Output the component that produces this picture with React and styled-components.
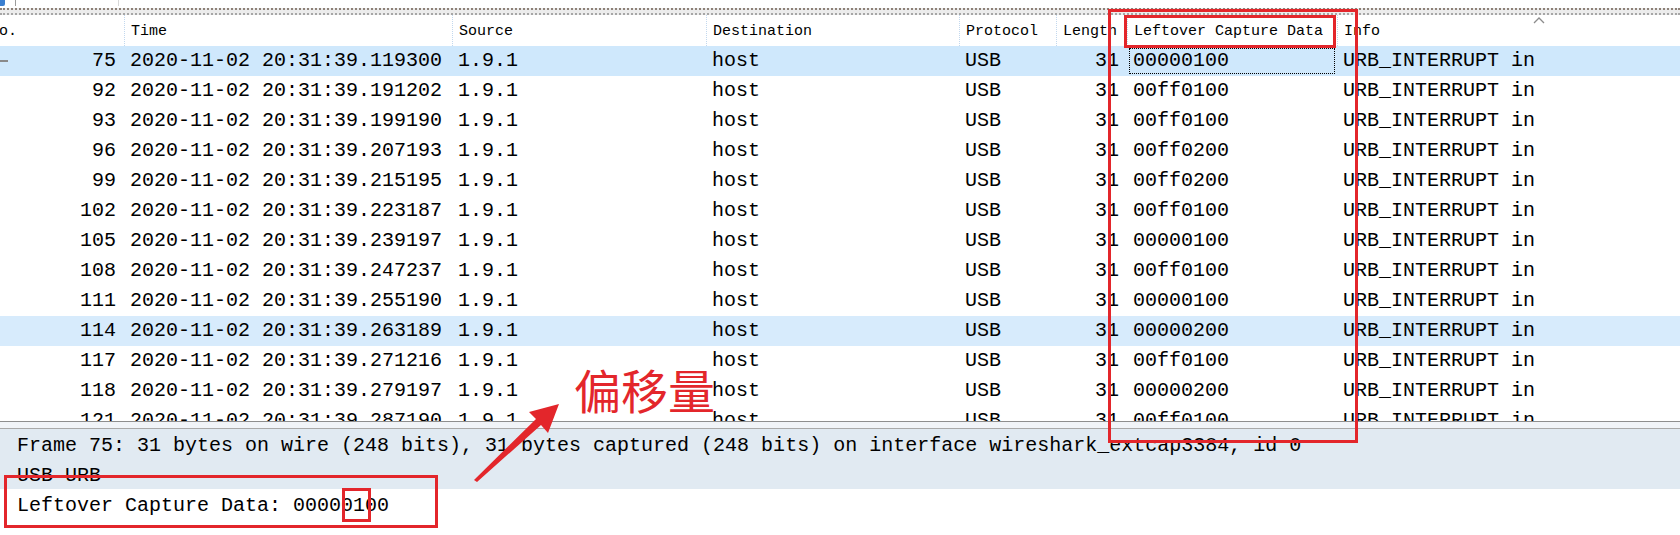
import React from 'react';
import styled, { createGlobalStyle } from 'styled-components';

const RED = '#e3262b';
const MONO = `"Liberation Mono", "DejaVu Sans Mono", monospace`;

const COLUMNS = [
  { key: 'no', title: 'No.', width: 140, align: 'right' },
  { key: 'time', title: 'Time', width: 328 },
  { key: 'src', title: 'Source', width: 254 },
  { key: 'dst', title: 'Destination', width: 253 },
  { key: 'proto', title: 'Protocol', width: 97 },
  { key: 'len', title: 'Length', width: 71, align: 'right' },
  { key: 'data', title: 'Leftover Capture Data', width: 210 },
  { key: 'info', title: 'Info', width: 402 },
];
const GRID = COLUMNS.map((c) => c.width + 'px').join(' ');

// [no, time fraction, leftover data]
const PACKETS = [
  [75, '119300', '00000100'],
  [92, '191202', '00ff0100'],
  [93, '199190', '00ff0100'],
  [96, '207193', '00ff0200'],
  [99, '215195', '00ff0200'],
  [102, '223187', '00ff0100'],
  [105, '239197', '00000100'],
  [108, '247237', '00ff0100'],
  [111, '255190', '00000100'],
  [114, '263189', '00000200'],
  [117, '271216', '00ff0100'],
  [118, '279197', '00000200'],
  [121, '287190', '00ff0100'],
];
const SELECTED = 0;
const HOVER = 9;

const GlobalStyle = createGlobalStyle`
  html, body { margin: 0; padding: 0; background: #fff; }
  body { overflow: hidden; }
`;

const Screen = styled.div`
  position: relative;
  width: 1680px;
  height: 535px;
  overflow: hidden;
  display: flex;
  flex-direction: column;
  background: #fff;
  color: #000;
  font-family: ${MONO};
`;

const ToolbarEdge = styled.div`
  height: 8px;
  display: flex;
  align-items: flex-start;
  background: #fff;
`;

const ToolIcon = styled.span`
  width: 5px;
  height: 6px;
  background: #3b7fd0;
  border-radius: 0 0 2px 0;
`;

const FilterEdge = styled.span`
  margin-left: 10px;
  width: 102px;
  height: 6px;
  border-left: 1px solid #9c9c9c;
  border-right: 1px solid #d8d8d8;
  background: #fff;
`;

const Splitter = styled.div`
  height: 7px;
  box-sizing: border-box;
  border-top: 2px dotted #8d8077;
  border-bottom: 2px dotted #a6a6a6;
  background: #ececec;
`;

const PacketList = styled.div`
  height: 406px;
  overflow: hidden;
  flex-shrink: 0;
`;

const ListInner = styled.div`
  margin-left: -16px;
`;

const HeaderRow = styled.div`
  display: grid;
  grid-template-columns: ${GRID};
  height: 31px;
  background: #fff;
`;

const HeaderCell = styled.div`
  position: relative;
  box-sizing: border-box;
  padding: 2px 7px 0 6px;
  line-height: 29px;
  font-size: 15px;
  white-space: nowrap;
  overflow: hidden;
  border-left: 1px dotted #c2d8ee;
  &:first-child { border-left: none; }
`;

const SortArrow = styled.svg`
  position: absolute;
  top: 2px;
  left: 195px;
`;

const PacketRow = styled.div`
  display: grid;
  grid-template-columns: ${GRID};
  height: 30px;
  background: ${(p) => p.$bg};
`;

const Cell = styled.div`
  display: flex;
  align-items: center;
  justify-content: ${(p) => (p.$align === 'right' ? 'flex-end' : 'flex-start')};
  box-sizing: border-box;
  padding: 0 ${(p) => (p.$align === 'right' ? '8px' : '7px')} 0 6px;
  font-size: 20px;
  line-height: 30px;
  white-space: nowrap;
  overflow: hidden;
  outline: ${(p) => (p.$focus ? '1px dotted #000' : 'none')};
  outline-offset: -3px;
`;

const RelMark = styled.span`
  margin-left: 10px;
  margin-right: auto;
  width: 8px;
  height: 2px;
  background: #8a8a8a;
`;

const PaneDivider = styled.div`
  height: 8px;
  box-sizing: border-box;
  border-top: 1px solid #8e8e8e;
  border-bottom: 1px solid #a9a9a9;
  background: #f1f4f8;
`;

const Details = styled.div`
  flex: 1;
  display: flex;
  flex-direction: column;
`;

const DetailLine = styled.div`
  height: 30px;
  padding-left: 17px;
  font-size: 20px;
  line-height: 34px;
  white-space: nowrap;
  background: ${(p) => (p.$hl ? '#e1eaf2' : '#fff')};
`;

const RedBox = styled.div`
  position: absolute;
  box-sizing: border-box;
  border: 3px solid ${RED};
  pointer-events: none;
`;

const ColumnBox = styled(RedBox)`
  left: 1108px;
  top: 9px;
  width: 250px;
  height: 434px;
`;

const HeaderBox = styled(RedBox)`
  left: 1124px;
  top: 15px;
  width: 212px;
  height: 33px;
`;

const DetailBox = styled(RedBox)`
  left: 4px;
  top: 475px;
  width: 434px;
  height: 53px;
`;

const ByteBox = styled(RedBox)`
  left: 342px;
  top: 488px;
  width: 29px;
  height: 34px;
`;

const Callout = styled.div`
  position: absolute;
  left: 574px;
  top: 365px;
  font-family: "Noto Sans CJK SC", sans-serif;
  font-size: 47px;
  font-weight: 400;
  line-height: 1;
  color: ${RED};
  white-space: nowrap;
`;

const ArrowLayer = styled.svg`
  position: absolute;
  left: 0;
  top: 0;
  pointer-events: none;
`;

function rowBg(i) {
  if (i === SELECTED) return '#cfe8fc';
  if (i === HOVER) return '#d7ebfc';
  return '#fff';
}

export default function App() {
  return (
    <Screen>
      <GlobalStyle />
      <ToolbarEdge>
        <ToolIcon />
        <FilterEdge />
      </ToolbarEdge>
      <Splitter />
      <PacketList>
        <ListInner>
          <HeaderRow>
            {COLUMNS.map((c) => (
              <HeaderCell key={c.key}>
                {c.title}
                {c.key === 'info' && (
                  <SortArrow width="12" height="7" viewBox="0 0 12 7">
                    <polyline points="1,6 6,1 11,6" fill="none" stroke="#8c8c8c" strokeWidth="1.3" />
                  </SortArrow>
                )}
              </HeaderCell>
            ))}
          </HeaderRow>
          {PACKETS.map(([no, frac, data], i) => (
            <PacketRow key={no} $bg={rowBg(i)}>
              <Cell $align="right">
                {i === SELECTED && <RelMark />}
                {no}
              </Cell>
              <Cell>2020-11-02 20:31:39.{frac}</Cell>
              <Cell>1.9.1</Cell>
              <Cell>host</Cell>
              <Cell>USB</Cell>
              <Cell $align="right">31</Cell>
              <Cell $focus={i === SELECTED}>{data}</Cell>
              <Cell>URB_INTERRUPT in</Cell>
            </PacketRow>
          ))}
        </ListInner>
      </PacketList>
      <PaneDivider />
      <Details>
        <DetailLine $hl>
          Frame 75: 31 bytes on wire (248 bits), 31 bytes captured (248 bits) on interface wireshark_extcap3384, id 0
        </DetailLine>
        <DetailLine $hl>USB URB</DetailLine>
        <DetailLine>Leftover Capture Data: 00000100</DetailLine>
      </Details>

      <ColumnBox />
      <HeaderBox />
      <DetailBox />
      <ByteBox />
      <Callout>偏移量</Callout>
      <ArrowLayer width="1680" height="535" viewBox="0 0 1680 535">
        <polygon
          points="474,480 536,419 529,412 559,404 548,433 541,425 477,482"
          fill={RED}
        />
      </ArrowLayer>
    </Screen>
  );
}
